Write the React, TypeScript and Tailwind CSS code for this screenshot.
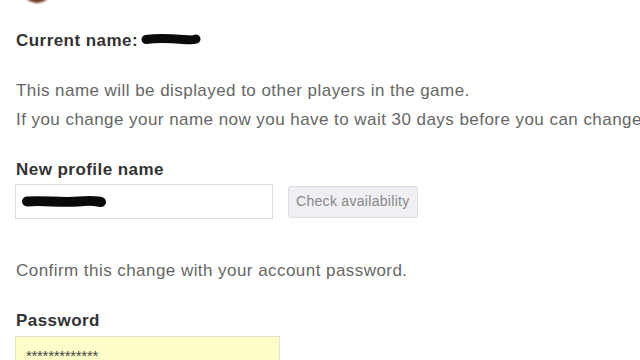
import React from "react";

const Scribble = ({ width, height, d, stroke = 9 }: { width: number; height: number; d: string; stroke?: number }) => (
  <svg width={width} height={height} viewBox={`0 0 ${width} ${height}`} className="block">
    <path d={d} fill="none" stroke="#0a0a0a" strokeWidth={stroke} strokeLinecap="round" strokeLinejoin="round" />
  </svg>
);

const App = () => {
  return (
    <div className="w-[640px] h-[360px] overflow-hidden bg-white font-['Liberation_Sans',Arial,sans-serif]">
      <div className="w-[30px] h-[30px] rounded-full bg-[#6b3d22] ml-[22px] mt-[-27px] blur-[1px]" />

      <div className="px-4">
        <div className="mt-[28px] flex items-center h-5">
          <span className="text-[17px] tracking-[0.45px] font-bold text-[#333]">Current name:</span>
          <span className="ml-[3px] mt-[-3px]">
            <Scribble width={60} height={13} d="M5 6.5 C 16 5, 30 5.5, 42 6.5 S 52 7, 55 6" />
          </span>
        </div>

        <p className="mt-[24.5px] text-[17px] tracking-[0.45px] leading-[29px] text-[#666]">
          This name will be displayed to other players in the game.
        </p>
        <p className="text-[17px] tracking-[0.45px] leading-[29px] text-[#666] whitespace-nowrap">
          If you change your name now you have to wait 30 days before you can change it again.
        </p>

        <div className="mt-[26.5px] text-[17px] tracking-[0.45px] leading-5 font-bold text-[#333]">New profile name</div>
        <div className="mt-[4px] flex items-center">
          <div className="w-[258px] h-[35px] ml-[-1px] border border-[#dcdcdc] bg-white flex items-center pl-[6px]">
            <Scribble width={84} height={16} d="M5 7.5 C 20 6, 40 9, 56 7.5 S 72 7, 79 8" stroke={10} />
          </div>
          <button className="ml-[15px] h-[32px] px-[7px] rounded-[3px] border border-[#dcdce2] bg-[#efeff4] text-[14px] tracking-[0.3px] text-[#888]">
            Check availability
          </button>
        </div>

        <p className="mt-[42px] text-[17px] tracking-[0.45px] leading-5 text-[#666]">Confirm this change with your account password.</p>

        <div className="mt-[30px] text-[17px] tracking-[0.45px] leading-5 font-bold text-[#333]">Password</div>
        <div className="mt-[5px] w-[265px] h-[35px] ml-[-1px] border border-[#e2e2c8] bg-[#fcfdc9] flex items-start pl-[10px] pt-[11px]">
          <span className="text-[15px] leading-none tracking-[-0.3px] text-[#444]">*************</span>
        </div>
      </div>
    </div>
  );
};

export default App;
